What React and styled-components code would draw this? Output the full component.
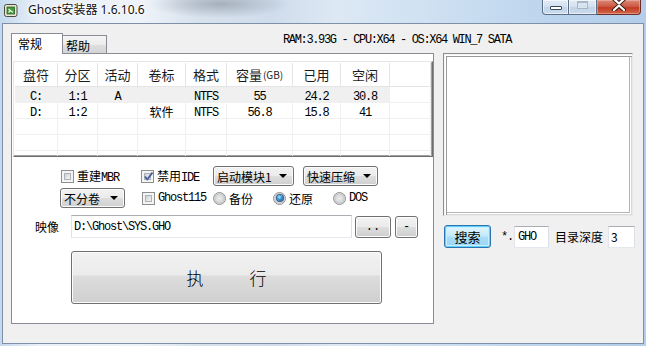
import React from "react";
import styled, { createGlobalStyle } from "styled-components";

const CJK = `"Noto Sans CJK SC", "Noto Sans", sans-serif`;
const MONO = `"Liberation Mono", "Noto Sans CJK SC", monospace`;

const GlobalStyle = createGlobalStyle`
  html, body { margin: 0; padding: 0; width: 646px; height: 346px; overflow: hidden; }
  body { font-family: ${CJK}; font-size: 12px; color: #000; }
  * { box-sizing: border-box; }
`;

const Window = styled.div`
  width: 646px;
  height: 346px;
  display: flex;
  flex-direction: column;
  padding: 0 2px 2px 2px;
  background:
    radial-gradient(ellipse 70px 14px at 220px 4px, rgba(150,160,172,0.75), rgba(150,160,172,0) 100%),
    linear-gradient(90deg, #c4d9ee 0%, #e9f0f8 6%, #eef3f9 22%, #d9e3ee 30%, #cfdceb 42%, #dde8f4 52%, #cde0f2 68%, #bcd4ed 85%, #b3cdea 100%);
`;

const TitleBar = styled.div`
  height: 23px;
  display: flex;
  align-items: flex-start;
  flex: none;
`;

const AppIcon = styled.svg`
  width: 14px;
  height: 14px;
  margin: 3px 0 0 2px;
  flex: none;
`;

const Title = styled.div`
  margin: 2px 0 0 10px;
  font-family: "Noto Sans", "Noto Sans CJK SC", sans-serif;
  font-size: 12px;
  line-height: 16px;
  color: #111;
  text-shadow: 0 0 6px #fff, 0 0 3px #fff, 0 0 2px #fff;
`;

const CaptionGroup = styled.div`
  margin-left: auto;
  margin-right: 3px;
  display: flex;
  height: 15px;
`;

const CapBtn = styled.div`
  width: ${(p) => p.$w}px;
  height: 15px;
  border: 1px solid #5d6f86;
  border-top: none;
  border-left: ${(p) => (p.$first ? "1px solid #5d6f86" : "none")};
  border-radius: ${(p) => (p.$first ? "0 0 0 4px" : "0")};
  background: linear-gradient(#e3ecf6, #d4e1ef 45%, #c3d4e7 55%, #cadbee);
  box-shadow: inset 0 0 0 1px rgba(255,255,255,0.55);
  display: flex;
  justify-content: center;
  align-items: flex-start;
`;

const CloseBtn = styled.div`
  width: 44px;
  height: 15px;
  border: 1px solid #6a2f28;
  border-top: none;
  border-left: none;
  border-radius: 0 0 4px 0;
  background: linear-gradient(#d98a79, #cc5b45 45%, #c23c24 55%, #d2664a);
  box-shadow: inset 0 0 0 1px rgba(255,200,190,0.45);
  display: flex;
  justify-content: center;
  align-items: flex-start;
`;

const MinGlyph = styled.div`
  width: 12px;
  height: 4px;
  margin-top: 6px;
  background: #fff;
  border: 1px solid #3b4a5e;
  border-radius: 1px;
`;

const MaxGlyph = styled.div`
  width: 11px;
  height: 8px;
  margin-top: 1px;
  border: 1px solid #a7b7ca;
  border-top-width: 2px;
  box-shadow: inset 0 0 0 1px #dbe5f0;
`;

const Client = styled.div`
  flex: 1;
  background: #f0f0f0;
  border: 1px solid #7d90a8;
  padding: 9px 9px 0 8px;
  display: flex;
  flex-direction: column;
`;

const TopStrip = styled.div`
  height: 20px;
  display: flex;
  align-items: flex-end;
  position: relative;
  z-index: 1;
`;

const Tab = styled.div`
  width: ${(p) => p.$w}px;
  height: ${(p) => (p.$active ? 21 : 18)}px;
  margin-bottom: ${(p) => (p.$active ? "-1px" : "0")};
  border: 1px solid #898c95;
  border-bottom: none;
  border-left: ${(p) => (p.$active ? "1px solid #898c95" : "none")};
  background: ${(p) =>
    p.$active ? "#fff" : "linear-gradient(#f4f4f4, #ececec 50%, #dedede 55%, #d4d4d4)"};
  font-family: ${CJK};
  font-size: 12px;
  line-height: ${(p) => (p.$active ? 18 : 17)}px;
  padding-left: ${(p) => (p.$active ? 6 : 3)}px;
  padding-top: 1px;
  color: #000;
`;

const Status = styled.div`
  align-self: flex-start;
  margin: 1px 0 0 176px;
  font-family: ${MONO};
  font-size: 12px;
  letter-spacing: -1.35px;
  line-height: 12px;
  white-space: nowrap;
`;

const Body = styled.div`
  display: flex;
  gap: 9px;
  align-items: flex-start;
`;

const Panel = styled.div`
  width: 423px;
  height: 271px;
  border: 1px solid #898c95;
  background: #fff;
  padding: 7px 0 0 1px;
  display: flex;
  flex-direction: column;
`;

const ListView = styled.div`
  width: 420px;
  height: 96px;
  border: 1px solid;
  border-color: #e6e6e6 #6d6d6d #6d6d6d #e6e6e6;
  box-shadow: inset -1px -1px 0 #a0a0a0, inset 1px 1px 0 #ffffff;
  padding: 1px;
  overflow: hidden;
  background: #fff;
`;

const COLS = "43px 40px 40px 48px 41px 66px 48px 49px 1fr";

const HeadRow = styled.div`
  display: grid;
  grid-template-columns: ${COLS};
  height: 24px;
  border-bottom: 1px solid #e5e5e5;
`;

const HeadCell = styled.div`
  border-right: 1px solid #e5e5e5;
  display: flex;
  align-items: center;
  justify-content: center;
  font-family: ${CJK};
  font-size: 13px;
  line-height: 16px;
  color: #1a1a1a;
  white-space: nowrap;
`;

const Small = styled.span`
  font-size: 10px;
  margin-left: 1px;
`;

const DataRow = styled.div`
  display: grid;
  grid-template-columns: ${COLS};
  height: 16px;
  border-bottom: 1px solid #f0f0f0;
`;

const DataCell = styled.div`
  height: 15px;
  border-right: 1px solid #f0f0f0;
  background: ${(p) => (p.$sel ? "#f0f0f0" : "transparent")};
  text-align: center;
  font-family: ${(p) => (p.$cjk ? CJK : MONO)};
  font-size: 12px;
  letter-spacing: ${(p) => (p.$cjk ? "0" : "-1.2px")};
  white-space: nowrap;
  line-height: 11px;
  padding-top: ${(p) => (p.$cjk ? 3 : 5)}px;
`;

const M = styled.span`
  font-family: ${MONO};
  font-size: 12px;
  letter-spacing: -1.2px;
`;

const Row = styled.div`
  display: flex;
  align-items: center;
  height: ${(p) => p.$h || 20}px;
  margin-top: ${(p) => p.$mt || 0}px;
  padding-left: ${(p) => p.$pl || 0}px;
`;

const Item = styled.label`
  display: flex;
  align-items: center;
  gap: 3px;
  width: ${(p) => (p.$w ? `${p.$w}px` : "auto")};
  flex: none;
  font-family: ${CJK};
  font-size: 12px;
  white-space: nowrap;
`;

const CheckBox = styled.span`
  width: 13px;
  height: 13px;
  flex: none;
  position: relative;
  border: 1px solid #8e8f8f;
  background: #f4f4f4;
  padding: 2px;
  display: flex;
  &::before {
    content: "";
    flex: 1;
    border: 1px solid #adb2b8;
    background: linear-gradient(135deg, #ccd0d5, #e6e7e9 60%, #f3f3f3);
  }
`;

const Tick = styled.svg`
  position: absolute;
  left: 1px;
  top: 0px;
  width: 11px;
  height: 11px;
`;

const RadioDot = styled.span`
  width: 13px;
  height: 13px;
  flex: none;
  border-radius: 50%;
  border: 1px solid #8e8f8f;
  background: radial-gradient(circle at 50% 50%, #e9e9e9 0, #dadbdc 45%, #bfc2c6 62%, #f2f2f2 70%);
  display: flex;
  align-items: center;
  justify-content: center;
  &::after {
    content: "";
    display: ${(p) => (p.$on ? "block" : "none")};
    width: 6px;
    height: 6px;
    border-radius: 50%;
    background: radial-gradient(circle at 40% 35%, #b6ecff 0, #2d95da 45%, #0c3f82 100%);
    box-shadow: 0 0 0 1px #3a5d8a;
  }
`;

const Select = styled.div`
  width: ${(p) => p.$w}px;
  height: 20px;
  flex: none;
  margin-right: ${(p) => p.$mr || 0}px;
  border: 1px solid #707070;
  border-radius: 3px;
  background: linear-gradient(#f2f2f2, #ebebeb 48%, #dddddd 52%, #cfcfcf);
  box-shadow: inset 0 0 0 1px #fbfbfb;
  display: flex;
  align-items: center;
  padding: 0 6px 0 3px;
  font-family: ${CJK};
  font-size: 12px;
  white-space: nowrap;
  &::after {
    content: "";
    margin-left: auto;
    border-left: 4px solid transparent;
    border-right: 4px solid transparent;
    border-top: 4px solid #000;
  }
`;

const FieldLabel = styled.div`
  width: ${(p) => p.$w}px;
  flex: none;
  font-family: ${CJK};
  font-size: 12px;
  white-space: nowrap;
  margin-left: ${(p) => p.$ml || 0}px;
`;

const TextBox = styled.div`
  width: ${(p) => p.$w}px;
  height: ${(p) => p.$h || 23}px;
  flex: none;
  margin-left: ${(p) => p.$ml || 0}px;
  background: #fff;
  border: 1px solid;
  border-color: #abadb3 #dbdfe6 #e3e9ef #e2e3ea;
  display: flex;
  align-items: center;
  padding-left: ${(p) => p.$pl || 2}px;
  font-family: ${(p) => (p.$cjk ? CJK : MONO)};
  font-size: 12px;
  letter-spacing: ${(p) => (p.$cjk ? "0" : "-1.2px")};
  white-space: nowrap;
`;

const Button = styled.div`
  width: ${(p) => p.$w}px;
  height: ${(p) => p.$h}px;
  flex: none;
  margin-left: ${(p) => p.$ml || 0}px;
  border: 1px solid #707070;
  border-radius: 3px;
  background: linear-gradient(#f2f2f2, #ebebeb 48%, #dddddd 52%, #cfcfcf);
  box-shadow: inset 0 0 0 1px #fcfcfc;
  display: flex;
  align-items: center;
  justify-content: center;
  font-family: ${MONO};
  font-size: 12px;
`;

const ExecButton = styled(Button)`
  margin-top: 13px;
  margin-left: 58px;
  font-family: ${CJK};
  font-size: 17px;
  font-weight: 300;
  letter-spacing: 4px;
  padding-left: 4px;
  color: #000;
  background: linear-gradient(#f2f2f2, #ebebeb 45%, #dddddd 47%, #cfcfcf);
`;

const Side = styled.div`
  width: 190px;
  display: flex;
  flex-direction: column;
`;

const ListBox = styled.div`
  height: 163px;
  background: #fff;
  border: 1px solid;
  border-color: #8c8c8c #e8e8e8 #e8e8e8 #8c8c8c;
  box-shadow: inset 1px 1px 0 #f6f6f6, inset 2px 2px 0 #fff, inset 3px 3px 0 #9a9a9a, inset -1px -1px 0 #d8d8d8, inset -2px -2px 0 #fff, inset -3px -3px 0 #b4b4b4;
`;

const SearchRow = styled.div`
  margin-top: 9px;
  height: 23px;
  display: flex;
  align-items: center;
`;

const SearchBtn = styled.div`
  width: 47px;
  height: 23px;
  flex: none;
  margin-left: 1px;
  border: 1px solid #2d73b0;
  border-radius: 3px;
  background: linear-gradient(#e4f5fd, #c7eafb 45%, #a9ddf7 55%, #99d5f4);
  box-shadow: inset 0 0 0 1px #5fd0fa, inset 0 0 0 2px #c8effd;
  display: flex;
  align-items: center;
  justify-content: center;
  font-family: ${CJK};
  font-size: 13px;
`;

const Mono = styled.div`
  font-family: ${MONO};
  font-size: 12px;
  letter-spacing: -1.2px;
  margin-left: ${(p) => p.$ml || 0}px;
  width: ${(p) => p.$w}px;
  flex: none;
`;

const Check = ({ w, on, children }) => (
  <Item $w={w}>
    <CheckBox>
      {on && (
        <Tick viewBox="0 0 11 11">
          <path d="M2 5.5 L4.3 8.5 L9.5 1.5" fill="none" stroke="#4b5f9a" strokeWidth="2" strokeLinejoin="round" />
        </Tick>
      )}
    </CheckBox>
    {children}
  </Item>
);

const Radio = ({ w, on, children }) => (
  <Item $w={w}>
    <RadioDot $on={on} />
    {children}
  </Item>
);

const rows = [
  { sel: true, c: ["C:", "1:1", "A", "", "NTFS", "55", "24.2", "30.8"] },
  { sel: false, c: ["D:", "1:2", "", "软件", "NTFS", "56.8", "15.8", "41"] },
  { sel: false, c: ["", "", "", "", "", "", "", ""] },
  { sel: false, c: ["", "", "", "", "", "", "", ""] },
  { sel: false, c: ["", "", "", "", "", "", "", ""] },
];

export default function App() {
  return (
    <>
      <GlobalStyle />
      <Window>
        <TitleBar>
          <AppIcon viewBox="0 0 14 14">
            <rect x="0.5" y="1.5" width="12.5" height="12" rx="2" fill="#ece8d6" stroke="#4a4a3c" />
            <rect x="3" y="4" width="7.5" height="7" fill="#3f9b39" stroke="#2b5e27" strokeWidth="0.8" />
            <path d="M4.5 6 L9 9.5 M4.5 9.5 L6.5 7.5" stroke="#e9f6e6" strokeWidth="1.2" />
          </AppIcon>
          <Title>Ghost安装器 1.6.10.6</Title>
          <CaptionGroup>
            <CapBtn $w={27} $first>
              <MinGlyph />
            </CapBtn>
            <CapBtn $w={28}>
              <MaxGlyph />
            </CapBtn>
            <CloseBtn>
              <svg width="14" height="11" viewBox="0 0 14 11">
                <path d="M2 -1 L7 3.5 L12 -1 M2 10 L7 5.5 L12 10" fill="none" stroke="#3b1b16" strokeWidth="4.2" strokeLinecap="round" />
                <path d="M2 -1 L7 3.5 L12 -1 M2 10 L7 5.5 L12 10" fill="none" stroke="#ffffff" strokeWidth="2.2" strokeLinecap="round" />
              </svg>
            </CloseBtn>
          </CaptionGroup>
        </TitleBar>
        <Client>
          <TopStrip>
            <Tab $active $w={52}>常规</Tab>
            <Tab $w={44}>帮助</Tab>
            <Status>RAM:3.93G - CPU:X64 - OS:X64 WIN_7 SATA</Status>
          </TopStrip>
          <Body>
            <Panel>
              <ListView>
                <HeadRow>
                  <HeadCell>盘符</HeadCell>
                  <HeadCell>分区</HeadCell>
                  <HeadCell>活动</HeadCell>
                  <HeadCell>卷标</HeadCell>
                  <HeadCell>格式</HeadCell>
                  <HeadCell>
                    容量<Small>(GB)</Small>
                  </HeadCell>
                  <HeadCell>已用</HeadCell>
                  <HeadCell>空闲</HeadCell>
                  <HeadCell />
                </HeadRow>
                {rows.map((r, i) => (
                  <DataRow key={i}>
                    {r.c.map((t, j) => (
                      <DataCell key={j} $sel={r.sel} $cjk={/[\u4e00-\u9fff]/.test(t)}>
                        {t}
                      </DataCell>
                    ))}
                    <DataCell />
                  </DataRow>
                ))}
              </ListView>

              <Row $mt={9} $pl={48}>
                <Check w={80}>
                  <span>
                    重建<M>MBR</M>
                  </span>
                </Check>
                <Check w={72} on>
                  <span>
                    禁用<M>IDE</M>
                  </span>
                </Check>
                <Select $w={81} $mr={9}>
                  启动模块1
                </Select>
                <Select $w={75}>快速压缩</Select>
              </Row>

              <Row $mt={2} $pl={47}>
                <Select $w={65} $mr={17}>
                  不分卷
                </Select>
                <Check w={71}>
                  <M>Ghost115</M>
                </Check>
                <Radio w={60}>备份</Radio>
                <Radio w={60} on>
                  还原
                </Radio>
                <Radio>
                  <M>DOS</M>
                </Radio>
              </Row>

              <Row $mt={7} $h={23} $pl={22}>
                <FieldLabel $w={36}>映像</FieldLabel>
                <TextBox $w={281}>D:\Ghost\SYS.GHO</TextBox>
                <Button $w={36} $h={22} $ml={3}>
                  ..
                </Button>
                <Button $w={23} $h={22} $ml={4}>
                  -
                </Button>
              </Row>

              <ExecButton $w={311} $h={53}>
                执　　行
              </ExecButton>
            </Panel>

            <Side>
              <ListBox />
              <SearchRow>
                <SearchBtn>搜索</SearchBtn>
                <Mono $ml={10} $w={12}>
                  *.
                </Mono>
                <TextBox $w={35} $h={22} $ml={1} $pl={3}>
                  GHO
                </TextBox>
                <FieldLabel $w={48} $ml={6}>
                  目录深度
                </FieldLabel>
                <TextBox $w={27} $h={22} $ml={5} $cjk>
                  3
                </TextBox>
              </SearchRow>
            </Side>
          </Body>
        </Client>
      </Window>
    </>
  );
}
